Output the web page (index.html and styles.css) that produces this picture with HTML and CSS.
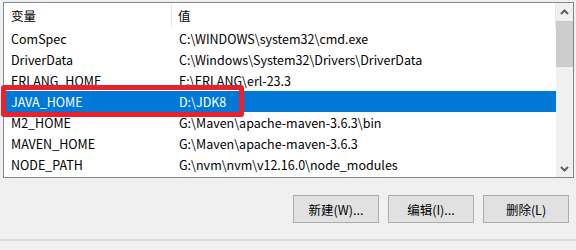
FILE: index.html
```html
<!DOCTYPE html>
<html lang="zh-CN">
<head>
<meta charset="utf-8">
<link rel="stylesheet" href="styles.css">
</head>
<body>
<div class="listbox">
  <div class="table">
    <div class="header">
      <div class="hcell c1">变量</div>
      <div class="hcell c2">值</div>
    </div>
    <div class="row"><span class="c1">ComSpec</span><span class="c2">C:\WINDOWS\system32\cmd.exe</span></div>
    <div class="row"><span class="c1">DriverData</span><span class="c2">C:\Windows\System32\Drivers\DriverData</span></div>
    <div class="row"><span class="c1">ERLANG_HOME</span><span class="c2">E:\ERLANG\erl-23.3</span></div>
    <div class="row selected"><span class="c1">JAVA_HOME</span><span class="c2">D:\JDK8</span></div>
    <div class="row"><span class="c1">M2_HOME</span><span class="c2">G:\Maven\apache-maven-3.6.3\bin</span></div>
    <div class="row"><span class="c1">MAVEN_HOME</span><span class="c2">G:\Maven\apache-maven-3.6.3</span></div>
    <div class="row"><span class="c1">NODE_PATH</span><span class="c2">G:\nvm\nvm\v12.16.0\node_modules</span></div>
  </div>
  <div class="scrollbar">
    <div class="arrow up"><svg width="9" height="6" viewBox="0 0 9 6"><path d="M1 5 L4.5 1.5 L8 5" fill="none" stroke="#606060" stroke-width="2"/></svg></div>
    <div class="track"><div class="thumb"></div></div>
    <div class="arrow down"><svg width="9" height="6" viewBox="0 0 9 6"><path d="M1 1 L4.5 4.5 L8 1" fill="none" stroke="#606060" stroke-width="2"/></svg></div>
  </div>
  <div class="highlight"></div>
</div>
<div class="buttons">
  <button class="btn">新建(W)...</button>
  <button class="btn">编辑(I)...</button>
  <button class="btn">删除(L)</button>
</div>
<div class="sep"></div>
</body>
</html>
```

FILE: styles.css
```css
html, body {
  margin: 0;
  padding: 0;
  background: #f0f0f0;
  font-family: "Noto Sans CJK SC", "Noto Sans", sans-serif;
  font-size: 12.5px;
  color: #000;
}
.listbox {
  position: relative;
  margin: 2px 2px 0 3px;
  height: 174px;
  border: 1px solid #828790;
  background: #fff;
  display: flex;
}
.table {
  flex: 1;
}
.header {
  height: 25px;
  display: flex;
  align-items: center;
}
.hcell {
  height: 23px;
  display: flex;
  align-items: center;
}
.header .c1 {
  width: 168px;
  padding-left: 7px;
  box-sizing: border-box;
  border-right: 1px solid #e5e5e5;
}
.header .c2 {
  flex: 1;
  padding-left: 6px;
  border-right: 1px solid #e5e5e5;
}
.row {
  height: 21px;
  display: flex;
  align-items: center;
}
.row .c1 {
  width: 169px;
  padding-left: 7px;
  box-sizing: border-box;
}
.row .c2 {
  padding-left: 6px;
}
.row.selected {
  background: #0078d7;
  color: #fff;
}
.scrollbar {
  width: 17px;
  background: #f0f0f0;
  display: flex;
  flex-direction: column;
}
.arrow {
  height: 17px;
  display: flex;
  align-items: center;
  justify-content: center;
}
.track {
  flex: 1;
}
.thumb {
  margin-top: 1px;
  height: 46px;
  background: #cdcdcd;
}
.highlight {
  position: absolute;
  left: -3px;
  top: 82px;
  width: 233px;
  height: 22px;
  border: 5px solid #e8212b;
  border-radius: 3px;
}
.buttons {
  display: flex;
  justify-content: flex-end;
  gap: 9px;
  margin-top: 17px;
  padding-right: 7px;
}
.btn {
  width: 86px;
  height: 28px;
  background: #e1e1e1;
  border: 1px solid #adadad;
  font-family: "Noto Sans CJK SC", "Noto Sans", sans-serif;
  font-size: 12.5px;
  color: #000;
  padding: 0;
}
.sep {
  margin-top: 16px;
  height: 2px;
  background: #dadada;
}
```
